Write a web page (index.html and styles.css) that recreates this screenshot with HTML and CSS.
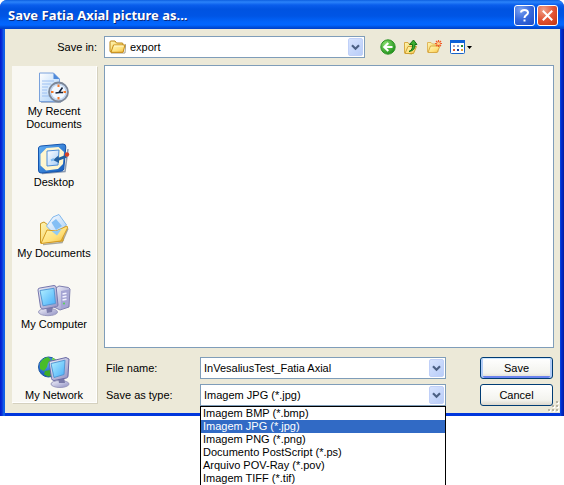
FILE: index.html
```html
<!DOCTYPE html>
<html lang="en">
<head>
<meta charset="utf-8">
<title>Save Fatia Axial picture as...</title>
<link rel="stylesheet" href="styles.css">
</head>
<body>
<svg class="defs" aria-hidden="true">
  <defs>
    <linearGradient id="gold" x1="0" y1="0" x2="1" y2="1"><stop offset="0" stop-color="#fff6b4"/><stop offset="1" stop-color="#f3c446"/></linearGradient>
    <linearGradient id="flap" x1="0" y1="0" x2="1" y2="1"><stop offset="0" stop-color="#fff9bc"/><stop offset=".6" stop-color="#ffe07a"/><stop offset="1" stop-color="#f0b93a"/></linearGradient>
    <linearGradient id="paper" x1="0" y1="0" x2="1" y2="1"><stop offset="0" stop-color="#ffffff"/><stop offset="1" stop-color="#a5cdf7"/></linearGradient>
    <linearGradient id="screen" x1="0" y1="0" x2="1" y2="1"><stop offset="0" stop-color="#b4f0ff"/><stop offset="1" stop-color="#46aefa"/></linearGradient>
    <linearGradient id="metal" x1="0" y1="0" x2="1" y2="1"><stop offset="0" stop-color="#f2f2fb"/><stop offset="1" stop-color="#8f8fc2"/></linearGradient>
    <linearGradient id="desk" x1="0" y1="0" x2="1" y2="1"><stop offset="0" stop-color="#64b0f6"/><stop offset="1" stop-color="#0f58ba"/></linearGradient>
    <radialGradient id="leaf" cx=".35" cy=".3" r=".8"><stop offset="0" stop-color="#8be070"/><stop offset="1" stop-color="#168a12"/></radialGradient>
    <radialGradient id="ocean" cx=".4" cy=".3" r=".8"><stop offset="0" stop-color="#5ab0f8"/><stop offset="1" stop-color="#0a3cac"/></radialGradient>
  </defs>
</svg>
<main class="dialog">
  <header class="titlebar">
    <h1 class="title">Save Fatia Axial picture as...</h1>
    <button class="caption help" aria-label="Help"><svg width="19" height="19" viewBox="0 0 19 19"><path d="M6 6.5Q6 4 9.5 4T13 6.8Q13 8.2 11 9.4Q9.5 10.3 9.5 12" fill="none" stroke="#fff" stroke-width="2"/><path d="M8.5 13.5h2v2h-2z" fill="#fff"/></svg></button>
    <button class="caption close" aria-label="Close"><svg width="19" height="19" viewBox="0 0 19 19"><path d="M5.5 5.5l8 8M13.5 5.5l-8 8" stroke="#fff" stroke-width="2" stroke-linecap="square"/></svg></button>
  </header>
  <div class="content">
    <div class="lookin">
      <label class="lookin-label" for="folder">Save in:</label>
      <div class="combo">
        <select id="folder" class="field folder"><option>export</option></select>
        <svg class="folder-icon" width="17" height="14" viewBox="0 0 17 14"><path d="M2 13h14l.7-9" fill="none" stroke="#a59f8c"/><path d="M1 11.5V2Q1 1 2 1h4l1.5 2H13q1 0 1 1v8H2z" fill="url(#gold)" stroke="#bd8617"/><path d="M2 12.3L4.5 5H16l-2 7.3z" fill="url(#flap)" stroke="#c88c14"/><path d="M5 6h9.5" stroke="#fffbd6"/></svg>
        <span class="arrow"><svg width="9" height="7" viewBox="0 0 9 7"><path d="M1 1.2l3.5 3.5L8 1.2" fill="none" stroke="#4d6185" stroke-width="2.2"/></svg></span>
      </div>
      <div class="tools">
        <button class="tool" aria-label="Back"><svg width="16" height="16" viewBox="0 0 16 16"><circle cx="8" cy="8" r="7.2" fill="url(#leaf)" stroke="#2f9428"/><path d="M12.5 8H5M8.3 4L4.2 8l4.1 4" fill="none" stroke="#fff" stroke-width="2"/></svg></button>
        <button class="tool" aria-label="Up One Level"><svg width="16" height="16" viewBox="0 0 16 16"><path d="M1.5 14V3.5H5L6 5h5v2L9 15z" fill="url(#gold)" stroke="#d8ab45"/><path d="M2 14.5L5 7.5h8.5l-3 7z" fill="url(#flap)" stroke="#cfa237"/><path d="M6 12.5Q10 11 9.5 5.5H6.5L10.5 1 14 5.5h-2Q12.5 11.5 6 12.5z" fill="#3cae32" stroke="#157415"/></svg></button>
        <button class="tool" aria-label="Create New Folder"><svg width="17" height="16" viewBox="0 0 17 16"><path d="M1.5 13V3.5H5L6.5 5H12v8z" fill="url(#gold)" stroke="#e0b75c"/><path d="M2 13.5L4.5 7H14l-3 6.5z" fill="url(#flap)" stroke="#d8aa45"/><path d="M12.5 1v7M9 4.5h7M10 2l5 5M15 2l-5 5" stroke="#f05a28" stroke-width="1.2"/><circle cx="12.5" cy="4.5" r="1.6" fill="#ffd18a"/></svg></button>
        <button class="tool" aria-label="View Menu"><svg width="23" height="16" viewBox="0 0 23 16"><rect x=".5" y="1.5" width="14" height="13" rx="1" fill="#fff" stroke="#1763c8"/><path d="M0 1h15v3H0z" fill="#0e61d8"/><path d="M3 6h2v2H3z" fill="#a99fc0"/><path d="M7 6h2v2H7z" fill="#8aa0d0"/><path d="M11 6h2v2h-2z" fill="#248b35"/><path d="M3 10h2v2H3z" fill="#d85a30"/><path d="M7 10h2v2H7z" fill="#173e9e"/><path d="M11 10h2v2h-2z" fill="#e39a35"/><path d="M17 7h5l-2.500 3z" fill="#000"/></svg></button>
      </div>
    </div>
    <div class="panes">
      <nav class="places">
        <a class="place" href="#recent"><svg width="34" height="32" viewBox="0 0 34 32"><path d="M4 30.5h20" fill="none" stroke="#a9b6c8"/><path d="M2.500 1h14l6 6v22.500h-20z" fill="url(#paper)" stroke="#7aa2dc"/><path d="M16.500 1v6h6z" fill="#4f8ada"/><path d="M5 9h12M5 12h9M5 15h6M5 18h5M5 21h5M5 24h7" stroke="#9cc0f2"/><circle cx="21.500" cy="20" r="9.500" fill="#cddaf0" stroke="#7c8798" stroke-width="1.800"/><circle cx="21.500" cy="20" r="7.500" fill="#f2f8ff" stroke="#b9d4f2"/><path d="M21.500 12.500v2.500M21.500 25v2.500M14 20h2.500M26.500 20H29" stroke="#f3792a" stroke-width="2"/><path d="M18.500 21l3.500-.5 3.500-5M22 20.500h4" fill="none" stroke="#18253b" stroke-width="1.600"/></svg><span>My Recent Documents</span></a>
        <a class="place" href="#desktop"><svg width="34" height="32" viewBox="0 0 34 32"><path d="M5 30.500l23-2L31 6" fill="none" stroke="#8d9bb0" stroke-width="1.500"/><path d="M1.500 5Q2 3 4 3l22-2q3 0 2.800 3l-2 22q-.3 2-3 2.200L4 30q-2.500 0-2.500-3z" fill="url(#desk)" stroke="#1554ac"/><path d="M3.500 11l6-6 12-1 5.500 5-1 12-5 5-12 1.500-5.500-5z" fill="#fff6cf"/><path d="M10 8l12-1-1 15-11 1z" fill="url(#paper)" stroke="#4d8dd8"/><path d="M16 17l5.500-4.500v2.300l7-2.800 1.500 2.500-8 3v2.500z" fill="#23609f"/><path d="M14 17.500l3-1.500" stroke="#7cb8ee" stroke-width="2"/><circle cx="30" cy="11.500" r="2.200" fill="#d54125"/></svg><span>Desktop</span></a>
        <a class="place" href="#documents"><svg width="34" height="32" viewBox="0 0 34 32"><path d="M6 30.500l19-2 6-14" fill="none" stroke="#aaa89c" stroke-width="1.500"/><path d="M3.500 29V9.500L7 8l4 3h5l10 3v13z" fill="url(#gold)" stroke="#c9961f"/><path d="M9.500 12L16 3l6-2.500L29.500 11 18 21z" fill="url(#paper)" stroke="#82b8ec"/><path d="M14.500 8.500L19 5l6 7-6 4z" fill="#84bff5"/><path d="M4 29.500l6-13.500 9 1 11-5 .5 2L24 27z" fill="url(#flap)" stroke="#d39a20"/><path d="M14.500 17l5.500 4.500 5-7-5.500 2.500z" fill="#92cbf4"/></svg><span>My Documents</span></a>
        <a class="place" href="#computer"><svg width="34" height="32" viewBox="0 0 34 32"><path d="M18 3.500L22 1l9.500 1.500L33 4l-1 18-9 3-6-3z" fill="url(#metal)" stroke="#8080b0"/><path d="M24 6l8-1.500-1 17-7 2.500z" fill="#a5a5d4"/><path d="M25.500 9l4-.7M25.500 12l4-.7M25.500 15l4-.7" stroke="#f2f2ff" stroke-width="1.500"/><circle cx="27" cy="18.500" r="1" fill="#53d253"/><ellipse cx="11" cy="27" rx="9.500" ry="3.700" fill="url(#metal)" stroke="#9a9abe"/><path d="M9 21h7l-1 6-5 1z" fill="#7c7caa"/><path d="M1 5Q1 3 3 3l14-2.500q2 0 2.200 2L21 20q0 1.500-1.500 1.700L6 24q-2 0-2.500-2z" fill="url(#metal)" stroke="#7676ac"/><path d="M3 5.500L17 3.300l1.500 15.200L6 20.800z" fill="url(#screen)" stroke="#5598d4"/></svg><span>My Computer</span></a>
        <a class="place" href="#network"><svg width="34" height="32" viewBox="0 0 34 32"><circle cx="11.500" cy="11" r="10" fill="url(#ocean)" stroke="#1b58a3"/><path d="M3 7q3-5 8-6l3 3-3 3-1 4-3 4-4-2z" fill="#48bd2a"/><path d="M8 15l5-1 1 6-3 .5-4-2z" fill="#3fac25"/><path d="M15 1.500l4 2 1.500 4-5-1z" fill="#74df43"/><ellipse cx="23" cy="28" rx="9" ry="3.500" fill="url(#metal)" stroke="#9a9abe"/><path d="M21 21h6l1 6h-6z" fill="#7a7aa8"/><path d="M12 5.500L29 1.500l3 1.500-1 17q0 1.500-1.500 2L17 24.500q-2 0-2.500-2z" fill="url(#metal)" stroke="#6a6aa4"/><path d="M14 7.500l14-3.300L27 18.500 17 21.500z" fill="url(#screen)" stroke="#5598d4"/></svg><span>My Network</span></a>
      </nav>
      <div class="main">
        <div class="files" role="list" aria-label="Files"></div>
        <form class="form">
          <label for="name">File name:</label>
          <div class="combo">
            <input id="name" class="field" type="text" value="InVesaliusTest_Fatia Axial">
            <span class="arrow"><svg width="9" height="7" viewBox="0 0 9 7"><path d="M1 1.2l3.5 3.5L8 1.2" fill="none" stroke="#4d6185" stroke-width="2.2"/></svg></span>
          </div>
          <button class="push default" type="button">Save</button>
          <label for="type">Save as type:</label>
          <div class="combo">
            <select id="type" class="field"><option>Imagem JPG (*.jpg)</option></select>
            <span class="arrow"><svg width="9" height="7" viewBox="0 0 9 7"><path d="M1 1.2l3.5 3.5L8 1.2" fill="none" stroke="#4d6185" stroke-width="2.2"/></svg></span>
            <ul class="menu" role="listbox" aria-label="Save as type">
              <li role="option">Imagem BMP (*.bmp)</li>
              <li role="option" class="selected" aria-selected="true">Imagem JPG (*.jpg)</li>
              <li role="option">Imagem PNG (*.png)</li>
              <li role="option">Documento PostScript (*.ps)</li>
              <li role="option">Arquivo POV-Ray (*.pov)</li>
              <li role="option">Imagem TIFF (*.tif)</li>
            </ul>
          </div>
          <button class="push" type="button">Cancel</button>
        </form>
      </div>
    </div>
    <svg class="grip" width="12" height="12" viewBox="0 0 12 12"><path d="M9 1h2v2H9zM5 5h2v2H5zM9 5h2v2H9zM1 9h2v2H1zM5 9h2v2H5zM9 9h2v2H9z" fill="#fff"/><path d="M8 0h2v2H8zM4 4h2v2H4zM8 4h2v2H8zM0 8h2v2H0zM4 8h2v2H4zM8 8h2v2H8z" fill="#b8b4a2"/></svg>
  </div>
</main>
</body>
</html>
```
FILE: styles.css
```css
* {
  box-sizing: border-box;
}

html,
body {
  height: 100%;
}

body {
  margin: 0;
  overflow: hidden;
  background: #fff;
  color: #000;
  font: 11px/13px "Liberation Sans", Arial, sans-serif;
}

button,
input,
select {
  margin: 0;
  font: inherit;
  color: inherit;
}

svg {
  display: block;
  flex: none;
}

.defs {
  position: absolute;
  width: 0;
  height: 0;
}

.dialog {
  border-radius: 7px 7px 0 0;
  background: linear-gradient(90deg, #0019cf, #0831d9 2px, #166aee 4px, #0855dd 5px, #0855dd calc(100% - 4px), #0030d8 calc(100% - 3px), #001ea0);
}

.titlebar {
  display: flex;
  align-items: center;
  gap: 2px;
  height: 29px;
  padding: 1px 6px 0 8px;
  border-radius: 7px 7px 0 0;
  background: linear-gradient(#0d5fe0, #2b83fa 2px, #0a5eec 5px, #0053e1 9px, #0055e5 16px, #0264fb 22px, #0266ff 25px, #0050dd 27px, #0040c8);
}

.title {
  flex: 1;
  margin: 0;
  color: #fff;
  font: bold 13px/16px "Noto Sans", sans-serif;
  text-shadow: 1px 1px #0b2a80;
}

.caption {
  width: 21px;
  height: 21px;
  padding: 0;
  border: 1px solid #fff;
  border-radius: 3px;
}

.help {
  background: radial-gradient(circle at 30% 20%, #7ba2f0, #3668dc 50%, #1c4cc4);
}

.close {
  background: radial-gradient(circle at 30% 20%, #f0a088, #e25434 50%, #c23410);
}

.content {
  position: relative;
  margin: 0 4px 0 5px;
  padding: 7px 6px 7px 7px;
  border-bottom: 3px solid #0036dc;
  background: #ece9d8;
}

.lookin {
  display: flex;
  align-items: center;
  margin-bottom: 7px;
}

.lookin-label {
  width: 92px;
  padding-right: 7px;
  text-align: right;
}

.lookin .combo {
  flex: 1;
}

.combo {
  position: relative;
}

.field {
  display: block;
  width: 100%;
  height: 22px;
  padding: 0 20px 0 3px;
  border: 1px solid #7f9db9;
  border-radius: 0;
  outline: 0;
  background: #fff;
  appearance: none;
}

.folder {
  padding-left: 25px;
}

.folder-icon {
  position: absolute;
  top: 4px;
  left: 5px;
}

.arrow {
  position: absolute;
  top: 2px;
  right: 2px;
  bottom: 2px;
  display: grid;
  place-items: center;
  width: 15px;
  border: 1px solid #c0d0f8;
  border-radius: 2px;
  background: linear-gradient(135deg, #d7e3fe, #b9cdf8);
  pointer-events: none;
}

.tools {
  display: flex;
  gap: 7px;
  width: 189px;
  padding-left: 15px;
}

.tool {
  padding: 0;
  border: 0;
  background: none;
}

.panes {
  display: flex;
  align-items: flex-start;
  gap: 7px;
}

.places {
  width: 85px;
  margin-top: 1px;
  padding-top: 6px;
  border: solid #fff;
  border-width: 0 1px 1px 0;
  background: #f9f8f3;
  box-shadow: 1px 1px #d5d1bf;
}

.place {
  display: flex;
  flex-direction: column;
  align-items: center;
  gap: 1px;
  min-height: 71px;
  color: inherit;
  text-align: center;
  text-decoration: none;
}

.place:last-child {
  min-height: 0;
}

.main {
  flex: 1;
  min-width: 0;
}

.files {
  height: 283px;
  margin-bottom: 9px;
  border: 1px solid #7f9db9;
  background: #fff;
}

.form {
  display: grid;
  grid-template-columns: 96px 1fr 73px;
  align-items: center;
  row-gap: 5px;
  margin-right: 1px;
}

.form label {
  padding-left: 2px;
}

.form .combo {
  margin-right: 34px;
}

.push {
  height: 22px;
  padding: 0;
  border: 1px solid #003c74;
  border-radius: 3px;
  background: linear-gradient(#fff, #f3f3ee 75%, #dcd8cd);
}

.default {
  box-shadow: inset 0 1px #cee7ff, inset 2px 0 #b3cdf7, inset -2px 0 #b3cdf7, inset 0 -2px #6982ee;
}

.menu {
  position: absolute;
  z-index: 1;
  top: 100%;
  left: 0;
  right: 0;
  margin: 0;
  padding: 0;
  border: 1px solid #000;
  background: #fff;
  list-style: none;
}

.menu li {
  padding: 0 2px;
}

.menu .selected {
  background: #316ac5;
  color: #fff;
}

.grip {
  position: absolute;
  right: 0;
  bottom: 0;
}
```
